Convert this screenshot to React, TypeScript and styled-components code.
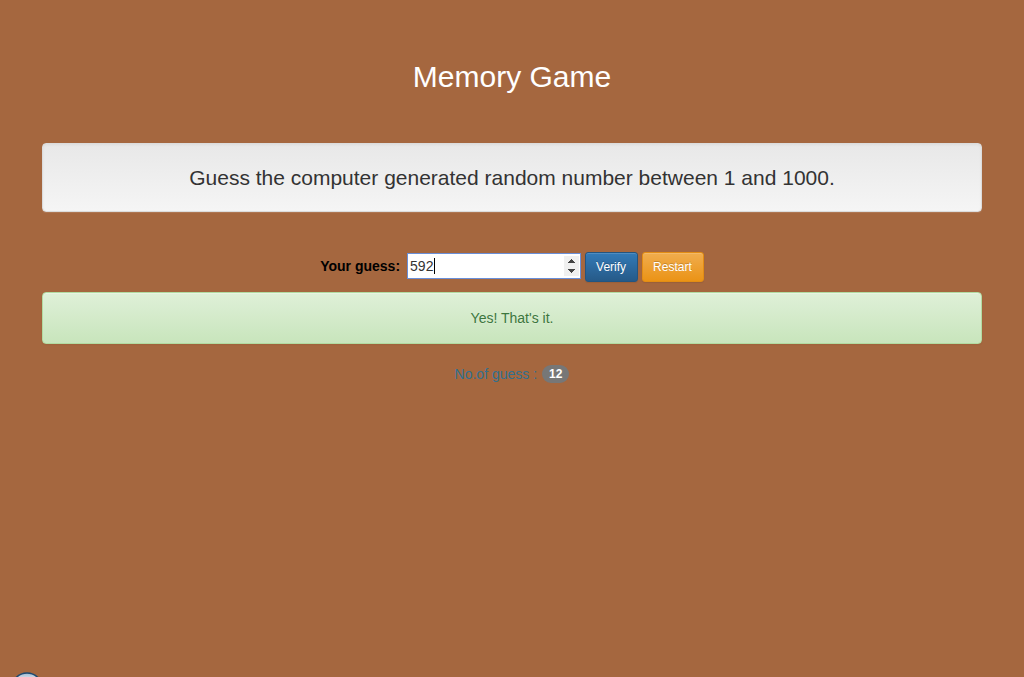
import React, { useState } from "react";
import styled, { createGlobalStyle, css } from "styled-components";

const GlobalStyle = createGlobalStyle`
  *, *::before, *::after { box-sizing: border-box; }
  body {
    margin: 0;
    background: #a5673f;
    color: #000;
    font-family: "Liberation Sans", Arial, sans-serif;
    font-size: 14px;
    line-height: 20px;
  }
`;

const Page = styled.div`
  position: relative;
  min-height: 100vh;
  overflow: hidden;
`;

const Container = styled.main`
  max-width: 970px;
  margin: 0 auto;
  padding: 60px 15px 0;
  text-align: center;
`;

const Title = styled.h2`
  margin: 0 0 50px;
  color: #fff;
  font-size: 30px;
  font-weight: 400;
  line-height: 33px;
`;

const Well = styled.div`
  padding: 19px;
  border: 1px solid #dcdcdc;
  border-radius: 4px;
  background: linear-gradient(to bottom, #e8e8e8, #f5f5f5);
  box-shadow: inset 0 1px 3px rgba(0, 0, 0, 0.05), 0 1px 0 rgba(255, 255, 255, 0.1);
  color: #333;
  font-size: 21px;
  line-height: 29px;
`;

const GuessForm = styled.form`
  display: flex;
  justify-content: center;
  align-items: center;
  gap: 4px;
  margin: 40px 0 10px;
`;

const Label = styled.label`
  padding: 0 3px 2px 0;
  font-weight: 700;
`;

const Field = styled.div`
  position: relative;
  width: 174px;
  margin-bottom: 2px;
`;

const NumberInput = styled.input`
  display: block;
  width: 100%;
  height: 26px;
  padding: 1px 2px;
  border: 1px solid #6a8fd8;
  border-radius: 0;
  outline: 0;
  background: #fff;
  color: #333;
  caret-color: transparent;
  font: 14px/20px "Liberation Sans", Arial, sans-serif;
  appearance: textfield;

  &::-webkit-inner-spin-button,
  &::-webkit-outer-spin-button {
    display: none;
  }
`;

const Caret = styled.span`
  position: absolute;
  top: 5px;
  left: 27px;
  width: 1px;
  height: 16px;
  background: #000;
`;

const Spinner = styled.span`
  position: absolute;
  top: 3px;
  right: 2px;
  display: flex;
  flex-direction: column;
  width: 15px;
  background: #f0f0f0;
`;

const Step = styled.button`
  display: flex;
  justify-content: center;
  align-items: center;
  height: 10px;
  padding: 0;
  border: 0;
  background: transparent;
`;

const Button = styled.button<{ $tone: "primary" | "warning" }>`
  height: 30px;
  padding: 0 11px 0 10px;
  border: 1px solid;
  border-radius: 3px;
  color: #fff;
  font: 12px/18px "Liberation Sans", Arial, sans-serif;
  text-shadow: 0 -1px 0 rgba(0, 0, 0, 0.2);
  box-shadow: inset 0 1px 0 rgba(255, 255, 255, 0.15), 0 1px 1px rgba(0, 0, 0, 0.075);
  ${({ $tone }) =>
    $tone === "primary"
      ? css`
          border-color: #245580;
          background: linear-gradient(to bottom, #337ab7, #265a88);
        `
      : css`
          border-color: #e38d13;
          background: linear-gradient(to bottom, #f0ad4e, #eb9316);
        `}
`;

const Alert = styled.div`
  padding: 15px;
  border: 1px solid #b2dba1;
  border-radius: 4px;
  background: linear-gradient(to bottom, #dff0d8, #c8e5bc);
  box-shadow: inset 0 1px 0 rgba(255, 255, 255, 0.25), 0 1px 2px rgba(0, 0, 0, 0.05);
  color: #3c763d;
  text-shadow: 0 1px 0 rgba(255, 255, 255, 0.2);
`;

const Counter = styled.p`
  display: flex;
  justify-content: center;
  align-items: center;
  gap: 5px;
  margin: 20px 0 0;
  color: #31708f;
`;

const Badge = styled.span`
  padding: 3px 7px;
  border-radius: 10px;
  background: #777;
  color: #fff;
  font-size: 12px;
  font-weight: 700;
  line-height: 12px;
`;

const Orb = styled.svg`
  position: absolute;
  bottom: -27px;
  left: 11px;
`;

export default function App() {
  const [guess, setGuess] = useState(592);
  return (
    <>
      <GlobalStyle />
      <Page>
        <Container>
          <Title>Memory Game</Title>
          <Well>Guess the computer generated random number between 1 and 1000.</Well>
          <GuessForm onSubmit={(e) => e.preventDefault()}>
            <Label htmlFor="guess">Your guess:</Label>
            <Field>
              <NumberInput
                id="guess"
                type="number"
                min={1}
                max={1000}
                value={guess}
                onChange={(e) => setGuess(Number(e.target.value))}
              />
              <Caret />
              <Spinner>
                <Step type="button" aria-label="Increase" onClick={() => setGuess(guess + 1)}>
                  <svg width="7" height="4" shapeRendering="crispEdges">
                    <path d="M3 0h1v1h1v1h1v1h1v1H0V3h1V2h1V1h1z" fill="#444" />
                  </svg>
                </Step>
                <Step type="button" aria-label="Decrease" onClick={() => setGuess(guess - 1)}>
                  <svg width="7" height="4" shapeRendering="crispEdges">
                    <path d="M0 0h7v1H6v1H5v1H4v1H3V3H2V2H1V1H0z" fill="#444" />
                  </svg>
                </Step>
              </Spinner>
            </Field>
            <Button $tone="primary" type="submit">Verify</Button>
            <Button $tone="warning" type="button">Restart</Button>
          </GuessForm>
          <Alert role="status">Yes! That's it.</Alert>
          <Counter>
            No.of guess : <Badge>12</Badge>
          </Counter>
        </Container>
        <Orb width="32" height="32" viewBox="0 0 32 32" aria-hidden="true">
          <defs>
            <linearGradient id="orb" x1="0" y1="0" x2="0" y2="1">
              <stop offset="0" stopColor="#9db6cf" />
              <stop offset="0.16" stopColor="#d0dce8" />
              <stop offset="1" stopColor="#4a7fb0" />
            </linearGradient>
          </defs>
          <circle cx="16" cy="16" r="15" fill="url(#orb)" stroke="#1f4a70" strokeWidth="1.5" />
        </Orb>
      </Page>
    </>
  );
}
